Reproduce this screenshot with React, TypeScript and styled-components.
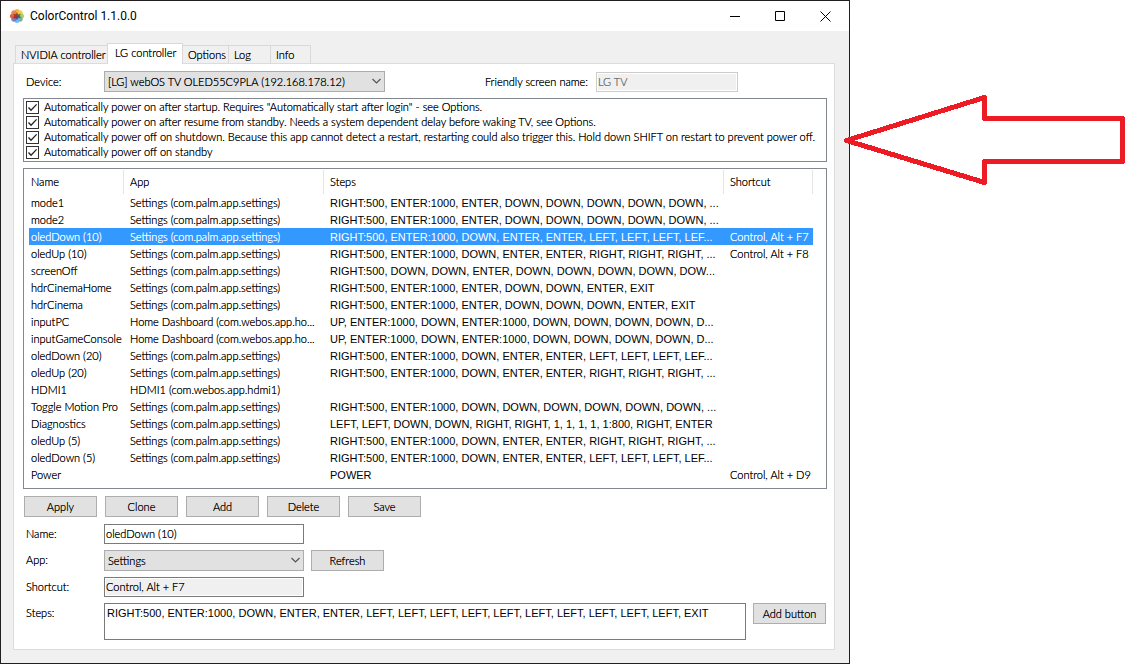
import React from "react";
import styled, { createGlobalStyle } from "styled-components";

const GlobalStyle = createGlobalStyle`
  *, *::before, *::after { box-sizing: border-box; }
  body {
    margin: 0;
    background: #fff;
    color: #000;
    font: 300 11px/15px Lato, "Liberation Sans", Arial, sans-serif;
    text-shadow: 0 0 currentColor;
  }
  button, input, select, textarea {
    margin: 0;
    font: inherit;
    color: inherit;
    text-shadow: inherit;
    border-radius: 0;
    outline: none;
  }
`;

const Screen = styled.div`
  display: flex;
  min-height: 100vh;
`;

const Window = styled.main`
  flex: 1;
  min-width: 0;
  display: flex;
  flex-direction: column;
  background: #f0f0f0;
  border: 1px solid #231f20;
`;

const Annotation = styled.aside`
  position: relative;
  flex: none;
  width: 281px;
`;

const ArrowSvg = styled.svg`
  position: absolute;
  left: -10px;
  top: 90px;
`;

const TitleBar = styled.header`
  display: flex;
  align-items: center;
  height: 30px;
  padding: 0 1px 0 8px;
  background: #fff;
`;

const Title = styled.h1`
  flex: 1;
  margin: 0 0 0 5px;
  font: 400 12px/16px Roboto, "Open Sans", sans-serif;
  text-shadow: none;
`;

const CaptionButton = styled.button`
  display: flex;
  align-items: center;
  justify-content: center;
  width: 45px;
  height: 29px;
  padding: 0;
  border: 0;
  background: none;
`;

const Client = styled.div`
  flex: 1;
  display: flex;
  flex-direction: column;
  padding: 12px 14px 13px 12px;
`;

const Tabs = styled.div`
  display: flex;
  align-items: flex-end;
  padding-left: 2px;
`;

const Tab = styled.button<{ $width: number; $active?: boolean }>`
  position: relative;
  width: ${(p) => p.$width}px;
  height: ${(p) => (p.$active ? 21 : 18)}px;
  margin: ${(p) => (p.$active ? "0 0 -1px -1px" : "0")};
  padding: ${(p) => (p.$active ? "0 0 4px 7px" : "0 0 1px 5px")};
  border: 1px solid #d9d9d9;
  border-bottom: 0;
  border-left-width: ${(p) => (p.$width < 60 ? 0 : 1)}px;
  background: ${(p) => (p.$active ? "#fff" : "#f0f0f0")};
  text-align: left;
  white-space: nowrap;
`;

const Panel = styled.section`
  flex: 1;
  padding: 7px 7px 9px 9px;
  border: 1px solid #dcdcdc;
  background: #fff;
`;

const DeviceRow = styled.div`
  display: flex;
  align-items: center;
  margin-bottom: 6px;
  padding: 0 89px 0 3px;
`;

const Label = styled.label`
  line-height: 20px;
`;

const DeviceLabel = styled(Label)`
  width: 78px;
`;

const FriendlyLabel = styled(Label)`
  margin: 0 8px 0 auto;
`;

const SelectBox = styled.div<{ $width: number }>`
  position: relative;
  width: ${(p) => p.$width}px;
  height: 21px;

  svg {
    position: absolute;
    right: 4px;
    top: 7px;
    pointer-events: none;
  }
`;

const Select = styled.select`
  appearance: none;
  display: block;
  width: 100%;
  height: 100%;
  padding: 0 20px 0 3px;
  border: 1px solid #acacac;
  background: #e1e1e1;
`;

const TextInput = styled.input<{ $width: number }>`
  width: ${(p) => p.$width}px;
  height: 20px;
  padding: 0 1px 1px;
  border: 1px solid #7a7a7a;
  background: #fff;

  &:read-only {
    background: #f0f0f0;
    box-shadow: inset 0 0 0 1px #fff;
  }

  &:disabled {
    border-color: #ccc;
    color: #6d6d6d;
  }
`;

const CheckList = styled.ul`
  height: 64px;
  margin: 0 0 6px;
  padding: 1px 2px;
  border: 1px solid #828790;
  list-style: none;
`;

const CheckRow = styled.label`
  display: flex;
  gap: 5px;
  height: 15px;
  line-height: 13px;
  white-space: nowrap;
`;

const CheckMark = styled.span`
  position: relative;
  display: flex;
  width: 13px;
  height: 13px;
  margin-top: 1px;

  svg {
    position: absolute;
    inset: 0;
    pointer-events: none;
  }
`;

const CheckInput = styled.input`
  appearance: none;
  width: 13px;
  height: 13px;
  border: 1px solid #333;
  background: #fff;

  &:not(:checked) + svg {
    display: none;
  }
`;

const ListView = styled.div`
  padding: 1px 13px 5px 5px;
  border: 1px solid #828790;
`;

const Table = styled.table`
  width: 100%;
  table-layout: fixed;
  border-collapse: separate;
  border-spacing: 0;
`;

const HeadCell = styled.th<{ $width?: number }>`
  width: ${(p) => (p.$width ? `${p.$width}px` : "auto")};
  height: 24px;
  padding: 0 0 2px 6px;
  border-right: 1px solid #e5e5e5;
  font-weight: inherit;
  text-align: left;

  &:first-child { padding-left: 2px; }
`;

const Row = styled.tr<{ $selected: boolean }>`
  background: ${(p) => (p.$selected ? "#3399ff" : "#fff")};
  color: ${(p) => (p.$selected ? "#fff" : "#000")};
`;

const Cell = styled.td`
  height: 17px;
  padding: 1px 0 0 6px;
  overflow: hidden;
  vertical-align: top;
  white-space: nowrap;
  text-shadow: 0 0 currentColor;

  &:first-child { padding-left: 2px; }
`;

const StepsCell = styled(Cell)`
  padding-top: 2px;
  font-family: "Liberation Sans", Arial, sans-serif;
  font-weight: 400;
  text-shadow: none;
`;

const Actions = styled.div`
  display: flex;
  gap: 8px;
  margin: 7px 0 7px 1px;
`;

const PushButton = styled.button`
  flex: none;
  width: 73px;
  height: 21px;
  padding: 0;
  border: 1px solid #adadad;
  background: #e1e1e1;
`;

const Form = styled.form`
  display: grid;
  grid-template-columns: 78px 1fr;
  row-gap: 6px;
  padding: 0 1px 0 3px;
`;

const Field = styled.div`
  display: flex;
  gap: 7px;
`;

const StepsBox = styled.textarea`
  flex: 1;
  height: 37px;
  padding: 2px;
  border: 1px solid #7a7a7a;
  background: #fff;
  font-family: "Liberation Sans", Arial, sans-serif;
  font-weight: 400;
  text-shadow: none;
  resize: none;
  overflow: hidden;
`;

const options = [
  'Automatically power on after startup. Requires "Automatically start after login" - see Options.',
  "Automatically power on after resume from standby. Needs a system dependent delay before waking TV, see Options.",
  "Automatically power off on shutdown. Because this app cannot detect a restart, restarting could also trigger this. Hold down SHIFT on restart to prevent power off.",
  "Automatically power off on standby",
];

const SETTINGS = "Settings (com.palm.app.settings)";
const HOME = "Home Dashboard (com.webos.app.ho...";

const presets: [string, string, string, string][] = [
  ["mode1", SETTINGS, "RIGHT:500, ENTER:1000, ENTER, DOWN, DOWN, DOWN, DOWN, DOWN, ...", ""],
  ["mode2", SETTINGS, "RIGHT:500, ENTER:1000, ENTER, DOWN, DOWN, DOWN, DOWN, DOWN, ...", ""],
  ["oledDown (10)", SETTINGS, "RIGHT:500, ENTER:1000, DOWN, ENTER, ENTER, LEFT, LEFT, LEFT, LEF...", "Control, Alt + F7"],
  ["oledUp (10)", SETTINGS, "RIGHT:500, ENTER:1000, DOWN, ENTER, ENTER, RIGHT, RIGHT, RIGHT, ...", "Control, Alt + F8"],
  ["screenOff", SETTINGS, "RIGHT:500, DOWN, DOWN, ENTER, DOWN, DOWN, DOWN, DOWN, DOW...", ""],
  ["hdrCinemaHome", SETTINGS, "RIGHT:500, ENTER:1000, ENTER, DOWN, DOWN, ENTER, EXIT", ""],
  ["hdrCinema", SETTINGS, "RIGHT:500, ENTER:1000, ENTER, DOWN, DOWN, DOWN, ENTER, EXIT", ""],
  ["inputPC", HOME, "UP, ENTER:1000, DOWN, ENTER:1000, DOWN, DOWN, DOWN, DOWN, D...", ""],
  ["inputGameConsole", HOME, "UP, ENTER:1000, DOWN, ENTER:1000, DOWN, DOWN, DOWN, DOWN, D...", ""],
  ["oledDown (20)", SETTINGS, "RIGHT:500, ENTER:1000, DOWN, ENTER, ENTER, LEFT, LEFT, LEFT, LEF...", ""],
  ["oledUp (20)", SETTINGS, "RIGHT:500, ENTER:1000, DOWN, ENTER, ENTER, RIGHT, RIGHT, RIGHT, ...", ""],
  ["HDMI1", "HDMI1 (com.webos.app.hdmi1)", "", ""],
  ["Toggle Motion Pro", SETTINGS, "RIGHT:500, ENTER:1000, DOWN, DOWN, DOWN, DOWN, DOWN, DOWN, ...", ""],
  ["Diagnostics", SETTINGS, "LEFT, LEFT, DOWN, DOWN, RIGHT, RIGHT, 1, 1, 1, 1, 1:800, RIGHT, ENTER", ""],
  ["oledUp (5)", SETTINGS, "RIGHT:500, ENTER:1000, DOWN, ENTER, ENTER, RIGHT, RIGHT, RIGHT, ...", ""],
  ["oledDown (5)", SETTINGS, "RIGHT:500, ENTER:1000, DOWN, ENTER, ENTER, LEFT, LEFT, LEFT, LEF...", ""],
  ["Power", "", "POWER", "Control, Alt + D9"],
];

const petals = ["#f9a72b", "#e6cf3a", "#a9cc4a", "#79a88c", "#5cb4f5", "#6f78bd", "#d9502f", "#ee7a30"];

const AppIcon = () => (
  <svg width="16" height="16" viewBox="0 0 16 16" aria-hidden="true">
    {petals.map((color, i) => (
      <ellipse key={color} cx="8" cy="4.2" rx="2.6" ry="3.3" fill={color} fillOpacity="0.9" transform={`rotate(${i * 45} 8 8)`} />
    ))}
    <path d="M8 4.2l1.1 2.3 2.6-.7-1.2 2.2 1.2 2.2-2.6-.4L8 12l-1-2.2-2.6.4 1.2-2.2-1.2-2.2 2.6.7z" fill="#3d2440" fillOpacity="0.65" />
    <path d="M4.5 6.2L8 8L6 11.5Z" fill="#c02a3a" fillOpacity="0.7" />
  </svg>
);

const Chevron = () => (
  <svg width="9" height="7" viewBox="0 0 9 7" aria-hidden="true">
    <path d="M0.5 1L4.5 5L8.5 1" fill="none" stroke="#555" strokeWidth="1.2" />
  </svg>
);

const Tick = () => (
  <svg width="13" height="13" viewBox="0 0 13 13" aria-hidden="true">
    <path d="M2.5 6.5L5 9.2L10.6 3.4" fill="none" stroke="#222" strokeWidth="1.3" />
  </svg>
);

const Arrow = () => (
  <ArrowSvg width="291" height="100" viewBox="840 90 291 100" role="img" aria-label="Arrow">
    <path
      d="M846.5 140.5L984.5 97.5V118.5H1122.5V161.5H984.5V182.5Z"
      fill="none"
      stroke="#ed1c24"
      strokeWidth="5"
      strokeLinejoin="round"
      shapeRendering="crispEdges"
    />
  </ArrowSvg>
);

export default function App() {
  return (
    <>
      <GlobalStyle />
      <Screen>
        <Window>
          <TitleBar>
            <AppIcon />
            <Title>ColorControl 1.1.0.0</Title>
            <CaptionButton aria-label="Minimize">
              <svg width="11" height="11"><path d="M0 5.5H10" stroke="#000" /></svg>
            </CaptionButton>
            <CaptionButton aria-label="Maximize">
              <svg width="11" height="11"><path d="M.5 .5H9.5V9.5H.5Z" fill="none" stroke="#000" /></svg>
            </CaptionButton>
            <CaptionButton aria-label="Close">
              <svg width="11" height="11"><path d="M.5 .5L10.5 10.5M10.5 .5L.5 10.5" stroke="#000" /></svg>
            </CaptionButton>
          </TitleBar>
          <Client>
            <Tabs role="tablist">
              <Tab role="tab" $width={93}>NVIDIA controller</Tab>
              <Tab role="tab" aria-selected $width={76} $active>LG controller</Tab>
              <Tab role="tab" $width={46}>Options</Tab>
              <Tab role="tab" $width={42}>Log</Tab>
              <Tab role="tab" $width={40}>Info</Tab>
            </Tabs>
            <Panel>
              <DeviceRow>
                <DeviceLabel htmlFor="device">Device:</DeviceLabel>
                <SelectBox $width={281}>
                  <Select id="device">
                    <option>[LG] webOS TV OLED55C9PLA (192.168.178.12)</option>
                  </Select>
                  <Chevron />
                </SelectBox>
                <FriendlyLabel htmlFor="friendly">Friendly screen name:</FriendlyLabel>
                <TextInput id="friendly" $width={142} defaultValue="LG TV" disabled />
              </DeviceRow>
              <CheckList>
                {options.map((text) => (
                  <li key={text}>
                    <CheckRow>
                      <CheckMark>
                        <CheckInput type="checkbox" defaultChecked />
                        <Tick />
                      </CheckMark>
                      {text}
                    </CheckRow>
                  </li>
                ))}
              </CheckList>
              <ListView>
                <Table>
                  <thead>
                    <tr>
                      <HeadCell $width={95}>Name</HeadCell>
                      <HeadCell $width={200}>App</HeadCell>
                      <HeadCell>Steps</HeadCell>
                      <HeadCell $width={89}>Shortcut</HeadCell>
                    </tr>
                  </thead>
                  <tbody>
                    {presets.map(([name, app, steps, shortcut]) => (
                      <Row key={name} $selected={name === "oledDown (10)"}>
                        <Cell>{name}</Cell>
                        <Cell>{app}</Cell>
                        <StepsCell>{steps}</StepsCell>
                        <Cell>{shortcut}</Cell>
                      </Row>
                    ))}
                  </tbody>
                </Table>
              </ListView>
              <Actions>
                {["Apply", "Clone", "Add", "Delete", "Save"].map((text) => (
                  <PushButton key={text} type="button">{text}</PushButton>
                ))}
              </Actions>
              <Form>
                <Label htmlFor="name">Name:</Label>
                <Field>
                  <TextInput id="name" $width={200} defaultValue="oledDown (10)" />
                </Field>
                <Label htmlFor="app">App:</Label>
                <Field>
                  <SelectBox $width={200}>
                    <Select id="app">
                      <option>Settings</option>
                    </Select>
                    <Chevron />
                  </SelectBox>
                  <PushButton type="button">Refresh</PushButton>
                </Field>
                <Label htmlFor="shortcut">Shortcut:</Label>
                <Field>
                  <TextInput id="shortcut" $width={200} defaultValue="Control, Alt + F7" readOnly />
                </Field>
                <Label htmlFor="steps">Steps:</Label>
                <Field>
                  <StepsBox
                    id="steps"
                    defaultValue="RIGHT:500, ENTER:1000, DOWN, ENTER, ENTER, LEFT, LEFT, LEFT, LEFT, LEFT, LEFT, LEFT, LEFT, LEFT, LEFT, EXIT"
                  />
                  <PushButton type="button">Add button</PushButton>
                </Field>
              </Form>
            </Panel>
          </Client>
        </Window>
        <Annotation>
          <Arrow />
        </Annotation>
      </Screen>
    </>
  );
}
